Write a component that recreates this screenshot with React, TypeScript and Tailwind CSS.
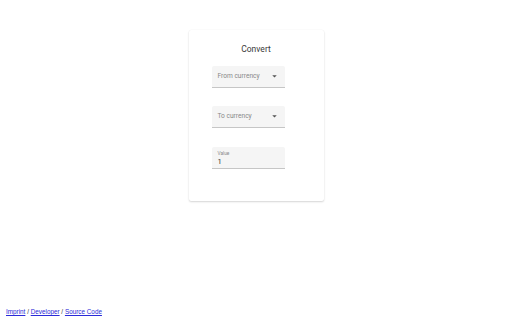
import React from "react";

function Arrow() {
  return (
    <svg width="5" height="3" viewBox="0 0 10 5" className="block">
      <path d="M0.5 0 L5 4.5 L9.5 0 Z" fill="#555" />
    </svg>
  );
}

function SelectField({ label, className }: { label: string; className?: string }) {
  return (
    <div
      className={`ml-[23px] w-[73px] h-[22px] bg-[#f5f5f5] rounded-t-[2px] border-b border-[#c6c6c6] flex items-center justify-between pl-[6px] pr-[8px] ${className ?? ""}`}
    >
      <span className="text-[6.6px] leading-none text-[#888]">{label}</span>
      <Arrow />
    </div>
  );
}

export default function App() {
  return (
    <div
      className="h-[320px] w-[512px] flex flex-col bg-white"
      style={{ fontFamily: "Roboto, 'Liberation Sans', sans-serif" }}
    >
      <div className="mt-[30px] mx-auto w-[135px] h-[171px] bg-white rounded-[2px] shadow-[0_1px_2px_rgba(0,0,0,0.16),0_0_1px_rgba(0,0,0,0.08)]">
        <div className="pt-[13px] h-[36px] text-center text-[8.5px] leading-[12px] text-[#3a3a3a]">
          Convert
        </div>
        <SelectField label="From currency" />
        <SelectField label="To currency" className="mt-[18px]" />
        <div className="mt-[19px] ml-[23px] w-[73px] h-[22px] bg-[#f5f5f5] rounded-t-[2px] border-b border-[#c6c6c6] pl-[6px] pt-[4px] flex flex-col">
          <span className="text-[4.8px] leading-[6px] text-[#8a8a8a]">Value</span>
          <span className="text-[7.5px] leading-[10px] text-[#333]">1</span>
        </div>
      </div>
      <div
        className="mt-auto pl-[6px] pb-[4px] text-[6.35px] leading-[8px] text-[#333]"
        style={{ fontFamily: "'Liberation Sans', Arial, sans-serif" }}
      >
        <a href="#" className="text-[#2a2ad8] underline">Imprint</a>
        {" / "}
        <a href="#" className="text-[#2a2ad8] underline">Developer</a>
        {" / "}
        <a href="#" className="text-[#2a2ad8] underline">Source Code</a>
      </div>
    </div>
  );
}
